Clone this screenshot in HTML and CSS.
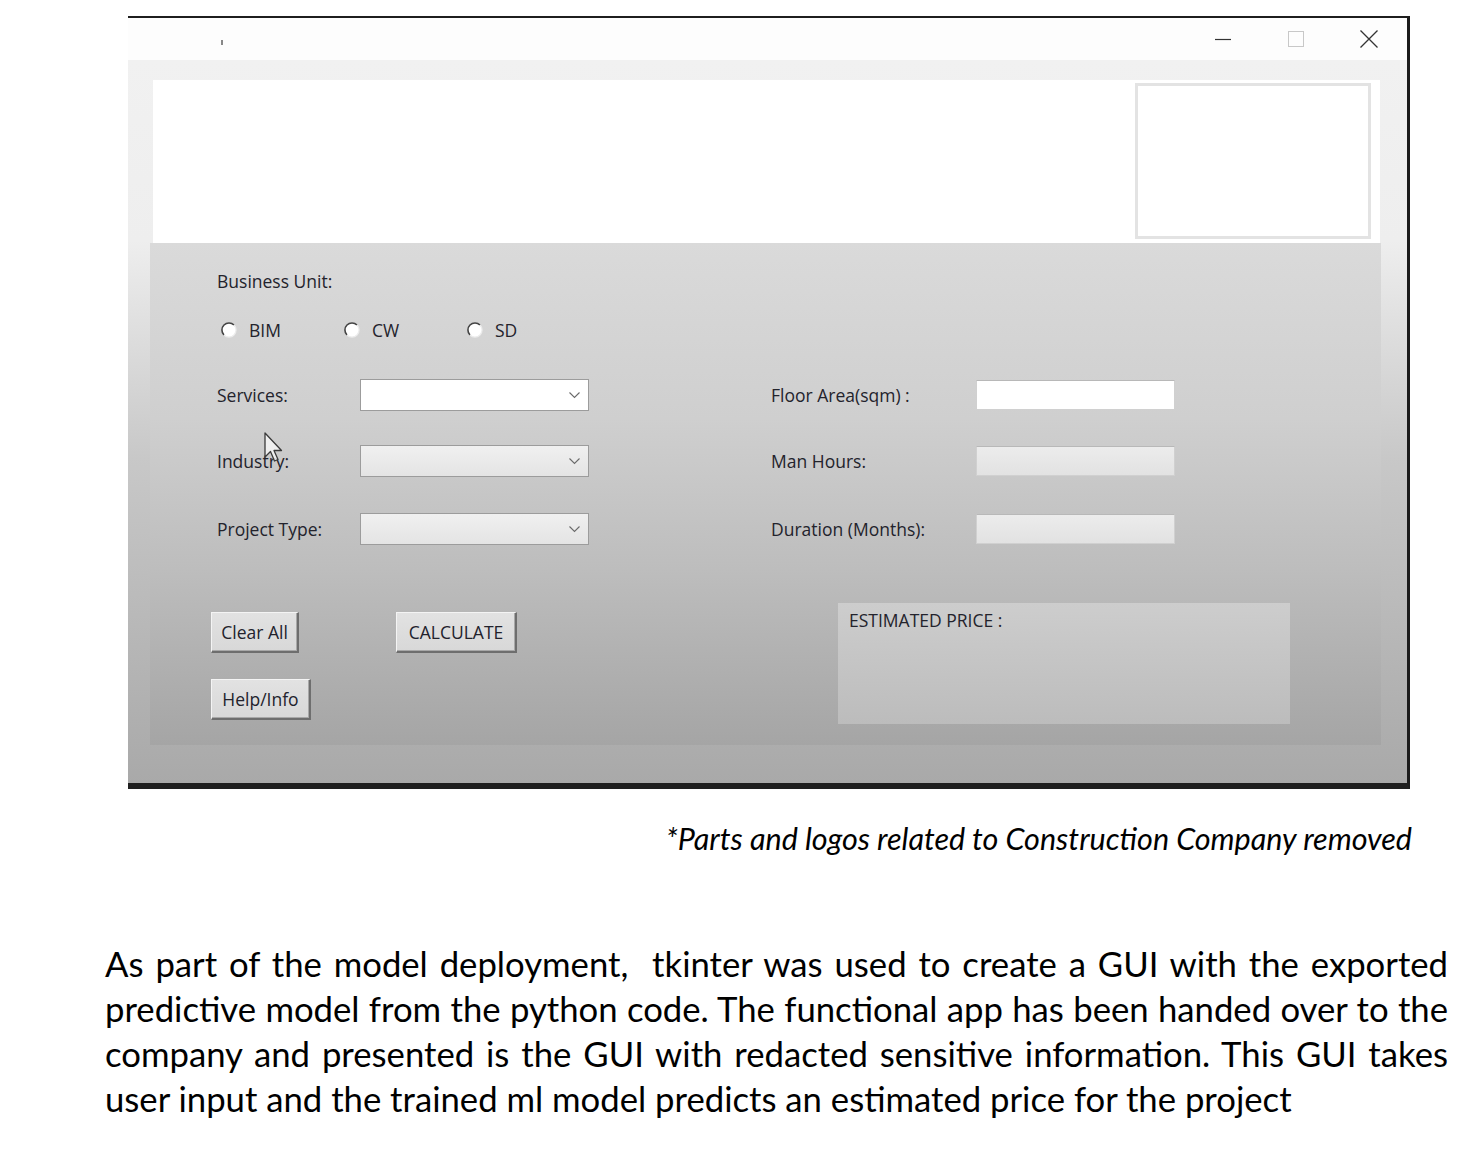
FILE: index.html
```html
<!DOCTYPE html>
<html>
<head>
<meta charset="utf-8">
<link rel="stylesheet" href="styles.css">
</head>
<body>
<div class="page">
  <div class="window">
    <div class="titlebar">
      <span class="app-icon"></span>
      <div class="controls">
        <span class="ctl"><svg width="18" height="18" viewBox="0 0 18 18"><path d="M1 9.5 H17" stroke="#333" stroke-width="1.2"/></svg></span>
        <span class="ctl"><svg width="18" height="18" viewBox="0 0 18 18"><rect x="1.5" y="1.5" width="15" height="15" fill="none" stroke="#c8c8c8" stroke-width="1"/></svg></span>
        <span class="ctl"><svg width="20" height="20" viewBox="0 0 20 20"><path d="M1.5 1.5 L18.5 18.5 M18.5 1.5 L1.5 18.5" stroke="#333" stroke-width="1.3"/></svg></span>
      </div>
    </div>
    <div class="client">
      <div class="header"><div class="logo-box"></div></div>
      <div class="panel">
        <div class="row row-bu"><span class="lbl">Business Unit:</span></div>
        <div class="row row-radio">
          <span class="radio"><svg width="16" height="16" viewBox="0 0 16 16"><circle cx="8" cy="8" r="7" fill="#fff"/><path d="M13 3 A7 7 0 1 0 3 13" fill="none" stroke="#444" stroke-width="1.6"/><path d="M3 13 A7 7 0 0 0 13 3" fill="none" stroke="#ececec" stroke-width="1.2"/></svg><span class="lbl">BIM</span></span>
          <span class="radio"><svg width="16" height="16" viewBox="0 0 16 16"><circle cx="8" cy="8" r="7" fill="#fff"/><path d="M13 3 A7 7 0 1 0 3 13" fill="none" stroke="#444" stroke-width="1.6"/><path d="M3 13 A7 7 0 0 0 13 3" fill="none" stroke="#ececec" stroke-width="1.2"/></svg><span class="lbl">CW</span></span>
          <span class="radio"><svg width="16" height="16" viewBox="0 0 16 16"><circle cx="8" cy="8" r="7" fill="#fff"/><path d="M13 3 A7 7 0 1 0 3 13" fill="none" stroke="#444" stroke-width="1.6"/><path d="M3 13 A7 7 0 0 0 13 3" fill="none" stroke="#ececec" stroke-width="1.2"/></svg><span class="lbl">SD</span></span>
        </div>
        <div class="row row-field first">
          <span class="lbl col-l">Services:</span>
          <span class="combo white"><svg width="11" height="7" viewBox="0 0 11 7"><path d="M0.5 0.5 L5.5 5.5 L10.5 0.5" fill="none" stroke="#6a6a6a" stroke-width="1.1"/></svg></span>
          <span class="spacer"></span>
          <span class="lbl col-r">Floor Area(sqm) :</span>
          <span class="entry white"></span>
        </div>
        <div class="row row-field">
          <span class="lbl col-l">Industry:</span>
          <span class="combo"><svg width="11" height="7" viewBox="0 0 11 7"><path d="M0.5 0.5 L5.5 5.5 L10.5 0.5" fill="none" stroke="#6a6a6a" stroke-width="1.1"/></svg></span>
          <span class="spacer"></span>
          <span class="lbl col-r">Man Hours:</span>
          <span class="entry"></span>
        </div>
        <div class="row row-field last">
          <span class="lbl col-l">Project Type:</span>
          <span class="combo"><svg width="11" height="7" viewBox="0 0 11 7"><path d="M0.5 0.5 L5.5 5.5 L10.5 0.5" fill="none" stroke="#6a6a6a" stroke-width="1.1"/></svg></span>
          <span class="spacer"></span>
          <span class="lbl col-r">Duration (Months):</span>
          <span class="entry"></span>
        </div>
        <div class="actions">
          <div class="buttons">
            <div class="btn-row">
              <span class="btn btn-clear">Clear All</span>
              <span class="btn btn-calc">CALCULATE</span>
            </div>
            <div class="btn-row second">
              <span class="btn btn-help">Help/Info</span>
            </div>
          </div>
          <div class="price-box">ESTIMATED PRICE :</div>
        </div>
        <svg class="cursor" width="20" height="32" viewBox="0 0 20 32"><path d="M1 1 L1 25 L6.5 19.5 L10.5 29 L14 27.5 L10 18.5 L17.5 18.5 Z" fill="#f4f4f4" fill-opacity="0.85" stroke="#3a3a3a" stroke-width="1.3" stroke-linejoin="round"/></svg>
      </div>
    </div>
  </div>
  <p class="caption">*Parts and logos related to Construction Company removed</p>
  <div class="para">
    <span class="line">As part of the model deployment,&nbsp; tkinter was used to create a GUI with the exported</span>
    <span class="line">predictive model from the python code. The functional app has been handed over to the</span>
    <span class="line">company and presented is the GUI with redacted sensitive information. This GUI takes</span>
    <span class="line end">user input and the trained ml model predicts an estimated price for the project</span>
  </div>
</div>
</body>
</html>
```

FILE: styles.css
```css
* { box-sizing: border-box; }
html, body { margin: 0; padding: 0; background: #fff; }
.page { padding-top: 16px; width: 1474px; }

.window {
  margin-left: 128px;
  width: 1282px;
  border-top: 2px solid #1e1e1e;
  border-right: 3px solid #1c1c1c;
  border-bottom: 6px solid #1f1f1f;
  font-family: "Open Sans", "Noto Sans", sans-serif;
}
.titlebar {
  height: 42px;
  background: #fdfdfd;
  display: flex;
  align-items: center;
  position: relative;
}
.app-icon {
  width: 2px; height: 5px; background: #888;
  margin-left: 93px; margin-top: 6px;
}
.controls { margin-left: auto; display: flex; padding-right: 2px; height: 100%; }
.ctl { width: 73px; display: flex; align-items: center; justify-content: center; }

.client {
  height: 723px;
  padding: 20px 26px 38px 22px;
  background: linear-gradient(#f1f1f1 0%, #eeeeee 25%, #c8c8c8 55%, #a9a9a9 100%);
}
.header {
  height: 163px;
  margin: 0 1px 0 3px;
  background: #fff;
  display: flex;
  justify-content: flex-end;
  padding: 3px 9px 4px 0;
}
.logo-box {
  width: 236px; height: 156px;
  border: 3px solid #e3e3e3;
  background: #fff;
}
.panel {
  position: relative;
  height: 502px;
  padding-left: 67px;
  background: linear-gradient(#dadada 0%, #cfcfcf 35%, #bdbdbd 65%, #a5a5a5 100%);
}
.lbl { font-size: 17.5px; color: #23232c; line-height: 24px; white-space: nowrap; }
.row { display: flex; align-items: center; }
.row-bu { height: 30px; padding-top: 23px; box-sizing: content-box; }
.row-radio { height: 30px; margin-top: 19px; padding-left: 4px; }
.radio { display: flex; align-items: center; width: 123px; }
.radio svg { margin-right: 12px; }
.row-field { height: 32px; margin-top: 34px; }
.row-field.first { margin-top: 34px; }
.row-field.last { margin-top: 36px; }
.col-l { width: 143px; }
.spacer { width: 182px; }
.col-r { width: 205px; }
.combo {
  width: 229px; height: 32px;
  border: 1px solid #9c9c9c;
  background: linear-gradient(#f0f0f0, #e4e4e4);
  display: flex; align-items: center; justify-content: flex-end;
  padding-right: 8px;
}
.combo.white { background: #fff; }
.entry {
  width: 199px; height: 30px;
  border: 1px solid #d0d0d0;
  border-top-color: #b8b8b8;
  background: linear-gradient(#ececec, #e2e2e2);
}
.entry.white { background: #fff; }

.actions { display: flex; margin-top: 58px; }
.buttons { width: 627px; margin-left: -6px; padding-top: 9px; }
.btn-row { display: flex; }
.btn-row.second { margin-top: 26px; }
.btn {
  height: 41px;
  display: flex; align-items: center; justify-content: center;
  font-size: 17.5px; color: #22222c;
  background: linear-gradient(#e2e2e2, #d8d8d8);
  border-top: 1px solid #f4f4f4;
  border-left: 1px solid #f4f4f4;
  border-right: 2px solid #6e6e6e;
  border-bottom: 2px solid #6e6e6e;
  box-shadow: inset -1px -1px 0 #a8a8a8;
}
.btn-clear { width: 88px; }
.btn-calc { width: 121px; margin-left: 97px; }
.btn-help { width: 100px; }
.price-box {
  width: 452px; height: 121px;
  background: linear-gradient(#cdcdcd, #bcbcbc);
  padding: 5px 11px;
  font-size: 17.5px; line-height: 24px; color: #23232c;
}
.cursor { position: absolute; left: 114px; top: 189px; }

.caption {
  margin: 32px 0 0 0;
  padding-right: 62px;
  text-align: right;
  font-family: Lato, "Open Sans", sans-serif;
  font-style: italic;
  font-size: 30.5px;
  line-height: 34px;
  color: #000;
}
.para {
  margin-top: 86px;
  margin-left: 105px;
  width: 1343px;
  font-family: Lato, "Open Sans", sans-serif;
  font-size: 34.7px;
  line-height: 45px;
  color: #000;
}
.line { display: block; text-align: justify; text-align-last: justify; white-space: nowrap; }
.line.end { text-align: left; text-align-last: left; }
```
